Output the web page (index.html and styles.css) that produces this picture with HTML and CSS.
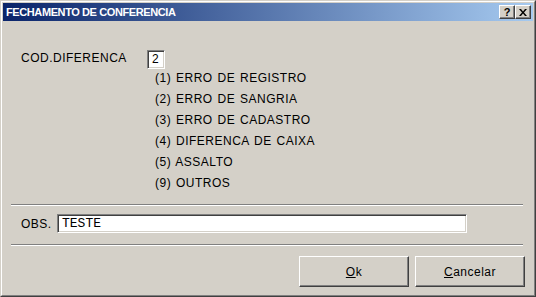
FILE: index.html
```html
<!DOCTYPE html>
<html lang="pt">
<head>
    <meta charset="UTF-8">
    <title>FECHAMENTO DE CONFERENCIA</title>
    <link rel="stylesheet" href="styles.css">
</head>
<body>
    <div class="window">
        <div class="frame">
            <div class="titlebar">
                <span class="title">FECHAMENTO DE CONFERENCIA</span>
                <div class="caption-btns">
                    <span class="cap-btn help">?</span>
                    <span class="cap-btn">
                        <svg width="8" height="7" viewBox="0 0 8 7">
                            <path d="M0 0h2l2 2.5 2-2.5h2L5 3.5 8 7H6L4 4.5 2 7H0l3-3.5z" fill="#000"/>
                        </svg>
                    </span>
                </div>
            </div>

            <div class="content">
                <div class="cod-row">
                    <label>COD.DIFERENCA</label>
                    <div class="field code">2</div>
                </div>

                <ul class="options">
                    <li>(1) ERRO DE REGISTRO</li>
                    <li>(2) ERRO DE SANGRIA</li>
                    <li>(3) ERRO DE CADASTRO</li>
                    <li>(4) DIFERENCA DE CAIXA</li>
                    <li>(5) ASSALTO</li>
                    <li>(9) OUTROS</li>
                </ul>

                <div class="separator first"></div>

                <div class="obs-row">
                    <label>OBS.</label>
                    <div class="field obs">TESTE</div>
                </div>

                <div class="separator second"></div>

                <div class="actions">
                    <button class="btn"><u>O</u>k</button>
                    <button class="btn"><u>C</u>ancelar</button>
                </div>
            </div>
        </div>
    </div>
</body>
</html>
```

FILE: styles.css
```css
body {
    margin: 0;
    font-family: "Liberation Sans", Arial, sans-serif;
    font-size: 12px;
    color: #000;
    background: #d4d0c8;
}
.window {
    width: 536px;
    height: 297px;
    box-sizing: border-box;
    background: #d4d0c8;
    border: 1px solid;
    border-color: #d4d0c8 #404040 #404040 #d4d0c8;
}
.frame {
    height: 100%;
    box-sizing: border-box;
    border: 1px solid;
    border-color: #fff #808080 #808080 #fff;
    padding: 1px;
}
.titlebar {
    height: 18px;
    display: flex;
    align-items: center;
    justify-content: space-between;
    padding: 0 2px;
    background: linear-gradient(to right, #0a246a, #a6caf0);
}
.title {
    color: #fff;
    font-weight: bold;
    font-size: 11px;
    letter-spacing: -0.4px;
    padding-left: 1px;
}
.caption-btns {
    display: flex;
}
.cap-btn {
    width: 16px;
    height: 14px;
    box-sizing: border-box;
    display: flex;
    align-items: center;
    justify-content: center;
    background: #d4d0c8;
    border: 1px solid;
    border-color: #fff #404040 #404040 #fff;
    box-shadow: inset -1px -1px #808080;
}
.cap-btn.help {
    font-weight: bold;
    font-size: 11px;
    line-height: 12px;
}
.content {
    padding: 0 8px;
    letter-spacing: 0.5px;
    word-spacing: 1px;
}
.cod-row {
    display: flex;
    align-items: flex-start;
    margin-top: 29px;
    padding-left: 10px;
}
.cod-row label {
    flex: 0 0 126px;
    line-height: 16px;
}
.field {
    box-sizing: border-box;
    height: 19px;
    background: #fff;
    border: 1px solid;
    border-color: #808080 #fff #fff #808080;
    box-shadow: inset 1px 1px #404040, inset -1px -1px #d4d0c8;
    line-height: 17px;
}
.field.code {
    width: 18px;
    padding-left: 4px;
}
.options {
    list-style: none;
    margin: -1px 0 0;
    padding-left: 144px;
    line-height: 21px;
}
.separator {
    margin-right: 2px;
    border-top: 1px solid #808080;
    border-bottom: 1px solid #fff;
}
.separator.first {
    margin-top: 10px;
}
.separator.second {
    margin-top: 11px;
}
.obs-row {
    display: flex;
    align-items: center;
    margin-top: 8px;
    padding-left: 10px;
}
.obs-row label {
    flex: 0 0 36px;
}
.field.obs {
    width: 410px;
    padding-left: 4px;
    font-family: "Liberation Mono", "Courier New", monospace;
    font-size: 13px;
    letter-spacing: 0;
}
.actions {
    display: flex;
    justify-content: flex-end;
    gap: 6px;
    margin-top: 10px;
}
.btn {
    width: 110px;
    height: 31px;
    background: #d4d0c8;
    border: 1px solid;
    border-color: #fff #404040 #404040 #fff;
    box-shadow: inset -1px -1px #808080;
    font-family: inherit;
    font-size: 12px;
    letter-spacing: 0.5px;
    color: #000;
    padding: 0;
}
```
